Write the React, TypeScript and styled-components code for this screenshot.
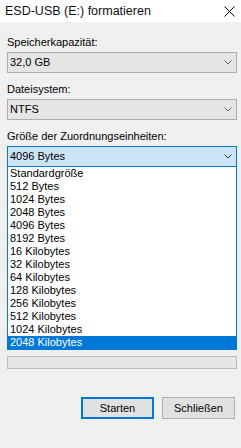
import styled, { createGlobalStyle } from "styled-components";

const GlobalStyle = createGlobalStyle`
  html, body {
    margin: 0;
    padding: 0;
    background: #f0f0f0;
  }
  * {
    box-sizing: border-box;
  }
`;

const Window = styled.div`
  width: 241px;
  height: 448px;
  display: flex;
  flex-direction: column;
  background: #f0f0f0;
  font-family: "Liberation Sans", Arial, sans-serif;
  font-size: 11px;
  color: #000;
  overflow: hidden;
`;

const TitleBar = styled.div`
  height: 22px;
  background: #fff;
  display: flex;
  align-items: center;
  justify-content: space-between;
  padding: 0 5px 0 5px;
`;

const Title = styled.span`
  font-size: 12.5px;
  color: #111;
`;

const CloseBtn = styled.div`
  width: 12px;
  height: 12px;
  display: flex;
  align-items: center;
  justify-content: center;
  margin-right: 1px;
`;

const Body = styled.div`
  flex: 1;
  display: flex;
  flex-direction: column;
  padding: 14px 4px 0 7px;
`;

const Label = styled.div<{ $gap?: number }>`
  height: 13px;
  line-height: 13px;
  margin-bottom: 3px;
  margin-top: ${(p) => p.$gap ?? 0}px;
`;

const Combo = styled.div<{ $open?: boolean }>`
  height: 21px;
  display: flex;
  align-items: center;
  justify-content: space-between;
  padding: 0 4px 0 2px;
  background: ${(p) => (p.$open ? "#cce4f7" : "#e5e5e5")};
  border: 1px solid ${(p) => (p.$open ? "#0078d7" : "#adadad")};
`;

const ComboText = styled.span`
  line-height: 13px;
`;

const List = styled.div`
  background: #fff;
  border: 1px solid #0078d7;
  border-top: none;
  display: flex;
  flex-direction: column;
`;

const Item = styled.div<{ $selected?: boolean }>`
  height: 13px;
  line-height: 13px;
  padding-left: 2px;
  white-space: nowrap;
  background: ${(p) => (p.$selected ? "#0078d7" : "transparent")};
  color: ${(p) => (p.$selected ? "#fff" : "#000")};
`;

const Progress = styled.div`
  margin-top: 6px;
  height: 13px;
  background: #e6e6e6;
  border: 1px solid #bcbcbc;
`;

const Buttons = styled.div`
  display: flex;
  justify-content: flex-end;
  gap: 8px;
  margin-top: 28px;
  padding-right: 2px;
`;

const Button = styled.div<{ $primary?: boolean }>`
  width: 73px;
  height: 22px;
  display: flex;
  align-items: center;
  justify-content: center;
  background: #e1e1e1;
  border: ${(p) => (p.$primary ? "2px solid #0078d7" : "1px solid #adadad")};
`;

const Chevron = ({ dark }: { dark?: boolean }) => (
  <svg width="8" height="5" viewBox="0 0 8 5">
    <polyline
      points="0.5,0.5 4,4 7.5,0.5"
      fill="none"
      stroke={dark ? "#333" : "#606060"}
      strokeWidth="1"
    />
  </svg>
);

const sizes = [
  "Standardgröße",
  "512 Bytes",
  "1024 Bytes",
  "2048 Bytes",
  "4096 Bytes",
  "8192 Bytes",
  "16 Kilobytes",
  "32 Kilobytes",
  "64 Kilobytes",
  "128 Kilobytes",
  "256 Kilobytes",
  "512 Kilobytes",
  "1024 Kilobytes",
  "2048 Kilobytes",
];

export default function App() {
  return (
    <>
      <GlobalStyle />
      <Window>
        <TitleBar>
          <Title>ESD-USB (E:) formatieren</Title>
          <CloseBtn>
            <svg width="11" height="11" viewBox="0 0 11 11">
              <line x1="0.5" y1="0.5" x2="10.5" y2="10.5" stroke="#000" strokeWidth="1" />
              <line x1="10.5" y1="0.5" x2="0.5" y2="10.5" stroke="#000" strokeWidth="1" />
            </svg>
          </CloseBtn>
        </TitleBar>
        <Body>
          <Label>Speicherkapazität:</Label>
          <Combo>
            <ComboText>32,0 GB</ComboText>
            <Chevron />
          </Combo>
          <Label $gap={10}>Dateisystem:</Label>
          <Combo>
            <ComboText>NTFS</ComboText>
            <Chevron />
          </Combo>
          <Label $gap={10}>Größe der Zuordnungseinheiten:</Label>
          <Combo $open>
            <ComboText>4096 Bytes</ComboText>
            <Chevron dark />
          </Combo>
          <List>
            {sizes.map((s) => (
              <Item key={s} $selected={s === "2048 Kilobytes"}>
                {s}
              </Item>
            ))}
          </List>
          <Progress />
          <Buttons>
            <Button $primary>Starten</Button>
            <Button>Schließen</Button>
          </Buttons>
        </Body>
      </Window>
    </>
  );
}
